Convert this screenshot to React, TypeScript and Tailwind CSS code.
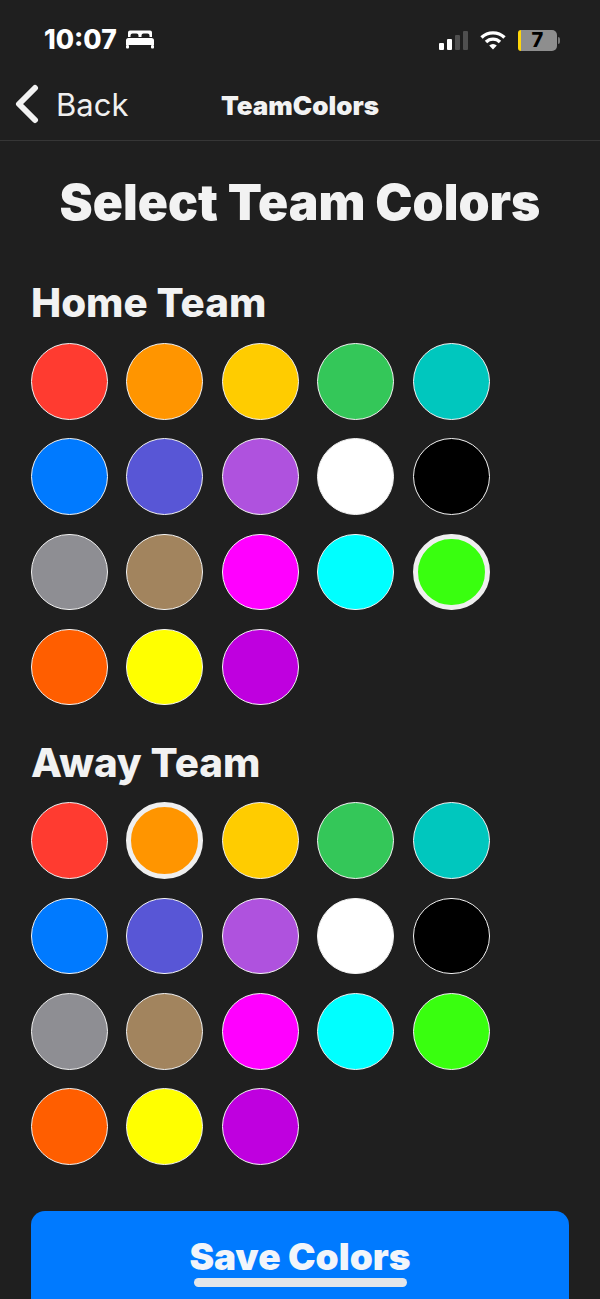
import type { ReactNode } from "react";

const SWATCHES = [
  "#ff3b30", "#ff9500", "#ffcc00", "#34c759", "#00c7be",
  "#007aff", "#5856d6", "#af52de", "#ffffff", "#000000",
  "#8e8e93", "#a2845e", "#ff00ff", "#00ffff", "#39ff0f",
  "#ff5e00", "#ffff00", "#bf00df",
];

function ColorGrid({ selected }: { selected: string }) {
  return (
    <div className="grid grid-cols-[repeat(5,76.6px)] gap-x-[18.9px] gap-y-[18.7px]">
      {SWATCHES.map((color) => (
        <div
          key={color}
          className={`w-[76.6px] h-[76.6px] rounded-full ${
            color === selected ? "border-[5px] border-[#efefef]" : "border-[1.5px] border-[#f2f2f2]"
          }`}
          style={{ backgroundColor: color }}
        />
      ))}
    </div>
  );
}

function SectionTitle({ children, className }: { children: ReactNode; className: string }) {
  return <h2 className={`text-[40.3px] leading-[44px] font-extrabold ${className}`}>{children}</h2>;
}

function StatusBar() {
  return (
    <div className="h-[80px] flex items-start justify-between pl-[44px] pr-[40px] pt-[25px]">
      <div className="flex items-center gap-[9px] h-[28px]">
        <span className="text-[26.500px] leading-[28px] font-extrabold text-white">10:07</span>
        <svg width="28" height="20" viewBox="0 0 28 20" fill="white">
          <path d="M4 1.500h20a2 2 0 0 1 2 2V8h-2.500V6.500a2 2 0 0 0-2-2h-4a2 2 0 0 0-2 2V8h-3V6.500a2 2 0 0 0-2-2h-4a2 2 0 0 0-2 2V8H2V3.500a2 2 0 0 1 2-2z" />
          <path d="M2.500 9h23A2.500 2.500 0 0 1 28 11.500V16H0v-4.500A2.500 2.500 0 0 1 2.500 9z" />
          <rect x="0" y="16" width="3" height="3.500" rx="1" />
          <rect x="25" y="16" width="3" height="3.500" rx="1" />
        </svg>
      </div>
      <div className="flex items-center h-[30px]">
        <div className="flex items-end gap-[3px] h-[20px] mr-[12px]">
          <div className="w-[5px] h-[7px] rounded-[1px] bg-white" />
          <div className="w-[5px] h-[11px] rounded-[1px] bg-white" />
          <div className="w-[5px] h-[15px] rounded-[1px] bg-[#4f4f4f]" />
          <div className="w-[5px] h-[19px] rounded-[1px] bg-[#4f4f4f]" />
        </div>
        <svg width="26" height="20" viewBox="0 0 26 20" fill="none" stroke="white" className="mr-[12px]">
          <path d="M1.500 7.500a16.500 16.500 0 0 1 23 0" strokeWidth="3.400" />
          <path d="M6 12a10 10 0 0 1 14 0" strokeWidth="3.400" />
          <path d="M13 19.500l-3.800-4a5.500 5.500 0 0 1 7.600 0z" fill="white" stroke="none" />
        </svg>
        <div className="relative w-[39px] h-[21px] flex items-center">
          <div className="w-[3px] h-full rounded-l-[5px] bg-[#ffd60a]" />
          <div className="flex-1 h-full rounded-r-[5px] bg-[#8e8e8e]" />
          <span className="absolute inset-0 flex items-center justify-center text-[20px] leading-none font-extrabold text-black">7</span>
        </div>
        <div className="w-[2px] h-[7px] ml-[1px] rounded-r-sm bg-[#777777]" />
      </div>
    </div>
  );
}

export default function App() {
  return (
    <div
      className="relative w-[600px] h-[1299px] overflow-hidden bg-[#1f1f1f] text-[#f2f2f2]"
      style={{ fontFamily: "Inter, 'Liberation Sans', sans-serif" }}
    >
      <StatusBar />
      <div className="relative h-[61px] flex items-center justify-center border-b border-[#363636]">
        <div className="absolute left-[14px] top-[3px] flex items-center gap-[16px] h-[42px]">
          <svg width="26" height="40" viewBox="0 0 26 40" fill="none" stroke="#f2f2f2" strokeWidth="6" strokeLinecap="round" strokeLinejoin="round">
            <path d="M21 4L5 20l16 16" />
          </svg>
          <span className="text-[31px] leading-none text-[#f0f0f0]">Back</span>
        </div>
        <span className="text-[26px] leading-none font-black text-[#f2f2f2] mt-[-8px]">TeamColors</span>
      </div>

      <h1 className="text-[49.800px] leading-[54px] font-black text-center mt-[34px]">Select Team Colors</h1>

      <div className="px-[31px] mt-[52px]">
        <SectionTitle className="mb-[18px]">Home Team</SectionTitle>
        <ColorGrid selected="#39ff0f" />
        <SectionTitle className="mt-[36px] mb-[17px]">Away Team</SectionTitle>
        <ColorGrid selected="#ff9500" />
        <div className="mt-[46px] h-[120px] rounded-[14px] bg-[#007aff] flex justify-center pt-[24px]">
          <span className="text-[37px] leading-[44px] font-black text-[#f2f5fa]">Save Colors</span>
        </div>
      </div>

      <div className="absolute left-[194px] top-[1278px] w-[213px] h-[9px] rounded-full bg-[#e4e6ea]" />
    </div>
  );
}
